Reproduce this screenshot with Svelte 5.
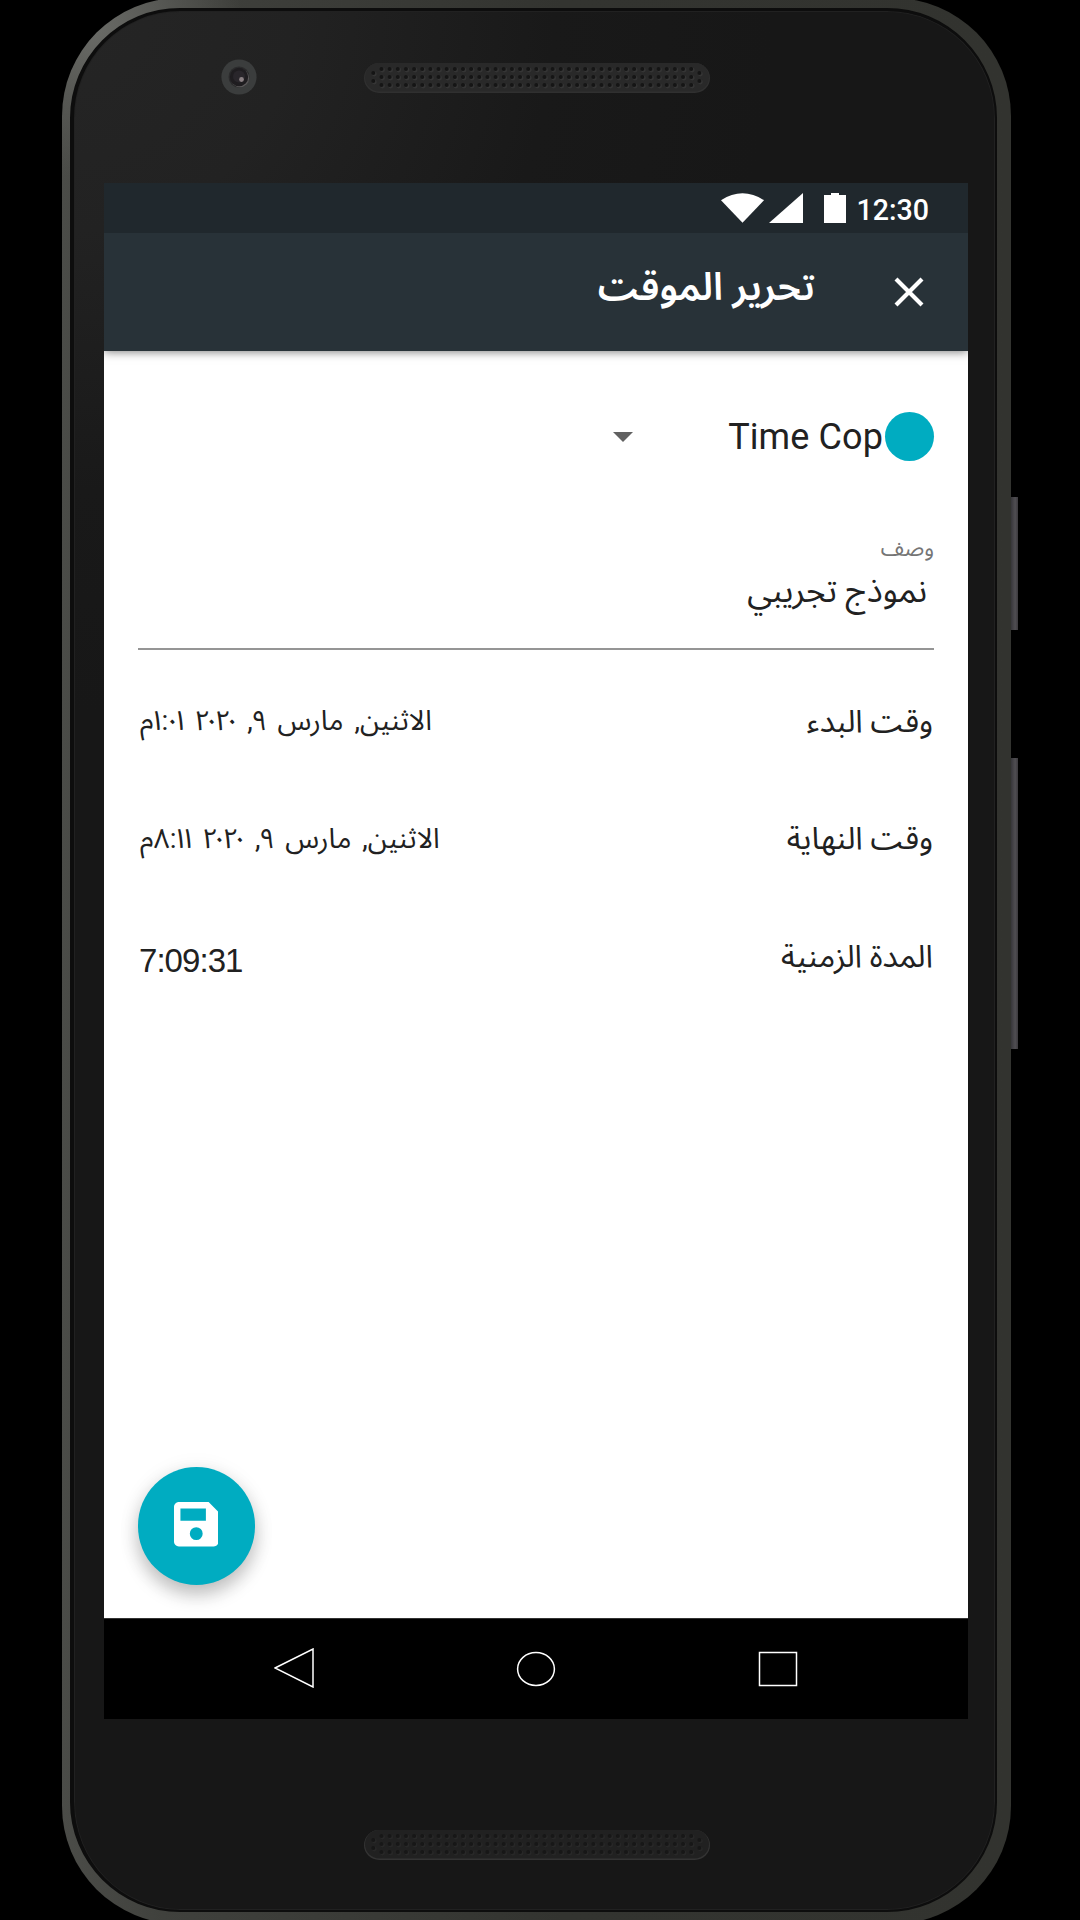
<script>
  const rows = [
    { label: 'وقت البدء', value: 'الاثنين, مارس ٩, ٢٠٢٠ ١:٠١م', kind: 'date' },
    { label: 'وقت النهاية', value: 'الاثنين, مارس ٩, ٢٠٢٠ ٨:١١م', kind: 'date' },
    { label: 'المدة الزمنية', value: '7:09:31', kind: 'duration' }
  ];
  const columns = Array.from({ length: 39 }, (_, i) => 17.5 + i * 8.15);
  const holes = [
    ...columns.flatMap((x) => [6, 14, 22].map((y) => ({ x, y }))),
    ...[9.3, 335.4].flatMap((x) => [10, 18].map((y) => ({ x, y })))
  ];
</script>

{#snippet grille(dim)}
  <svg class="grille" class:dim viewBox="0 0 346 30">
    <rect class="slot-edge" x="0" y="0" width="346" height="30" rx="15" />
    <rect class="slot" x="1" y="0" width="344" height="28.4" rx="14.2" />
    {#each holes as h}
      <circle class="hole-light" cx={h.x + 1} cy={h.y + 1} r="2.4" />
      <circle class="hole" cx={h.x} cy={h.y} r="2" />
    {/each}
  </svg>
{/snippet}

<div class="page">
  <div class="phone">
    <i class="key power"></i>
    <i class="key volume"></i>
    <div class="glass">
      <div class="top-bezel">
        <svg class="camera" viewBox="0 0 36 36">
          <circle cx="18" cy="18" r="17.6" fill="#3b3d3d" />
          <circle cx="18" cy="18" r="10.5" fill="#2b2b2c" />
          <circle cx="19" cy="19" r="9.2" fill="#5a5859" />
          <circle cx="18" cy="18" r="9.2" fill="#1f1d20" />
          <circle cx="18" cy="17.5" r="6" fill="#29262b" />
          <circle cx="20.5" cy="20.5" r="2.4" fill="#8a8083" />
        </svg>
        {@render grille(false)}
      </div>

      <main class="screen" dir="rtl">
        <div class="status" dir="ltr">
          <svg class="wifi" viewBox="0 0 44 30"><path d="M0 7Q22-7 44 7L22 30Z" /></svg>
          <svg class="signal" viewBox="0 0 34 30"><path d="M34 0V30H0Z" /></svg>
          <svg class="battery" viewBox="0 0 22 30"><path d="M7 0H15V2H22V30H0V2H7Z" /></svg>
          <span class="clock">12:30</span>
        </div>
        <header>
          <svg class="close" viewBox="0 0 30 30"><path d="M2 2L28 28M28 2L2 28" /></svg>
          <h1>تحرير الموقت</h1>
        </header>
        <section class="form">
          <div class="project">
            <i class="dot"></i>
            <span class="name" dir="ltr">Time Cop</span>
            <svg class="caret" viewBox="0 0 20 10"><path d="M0 0H20L10 10Z" /></svg>
          </div>
          <div class="field">
            <span class="hint">وصف</span>
            <span class="value">نموذج تجريبي</span>
          </div>
          {#each rows as row}
            <div class="row">
              <span class="label">{row.label}</span>
              <span class={row.kind}>{row.value}</span>
            </div>
          {/each}
          <div class="fab">
            <svg viewBox="3 3 18 18">
              <path fill-rule="evenodd" d="M17 3H5C3.9 3 3 3.9 3 5V19C3 20.1 3.9 21 5 21H19C20.1 21 21 20.1 21 19V7ZM5.6 5.6H15.9V10.6H5.6ZM12 13.2A2.6 2.6 0 1 1 12 18.4A2.6 2.6 0 0 1 12 13.2Z" />
            </svg>
          </div>
        </section>
        <nav dir="ltr">
          <svg class="back" viewBox="0 0 40 40"><path d="M1 20L39 1V39Z" /></svg>
          <svg class="home" viewBox="0 0 40 36"><ellipse cx="20" cy="18" rx="18.4" ry="16.4" /></svg>
          <svg class="recent" viewBox="0 0 40 36"><rect x="1.5" y="1.5" width="37" height="33" /></svg>
        </nav>
      </main>

      <div class="bottom-bezel">{@render grille(true)}</div>
    </div>
  </div>
</div>

<style>
  :global(body) { background: #000; }
  .page {
    width: 1080px;
    height: 1920px;
    overflow: hidden;
    background: #000;
    display: flex;
    font-family: Roboto, "Noto Sans Arabic", "Noto Sans", "DejaVu Sans", sans-serif;
    color: #212121;
  }
  .phone {
    position: relative;
    box-sizing: border-box;
    flex: none;
    width: 949px;
    height: 1926px;
    margin: -2px 0 0 62px;
    padding: 10px 14px 12px 8px;
    border-radius: 118px;
    background:
      radial-gradient(circle at 30px 30px, #6a6b67 0, #575854 70px, transparent 150px),
      linear-gradient(90deg, #4b4c48 0, #40413d 100px, #333430 500px, #32332f);
  }
  .key {
    position: absolute;
    left: 949px;
    width: 7px;
    background: linear-gradient(90deg, #37363a, #504e52 60%, #3b393d);
  }
  .power { top: 499px; height: 133px; }
  .volume { top: 760px; height: 291px; }
  .glass {
    box-sizing: border-box;
    width: 927px;
    height: 1904px;
    border: solid #0d0d0d;
    border-width: 3px 2px 2px 4px;
    border-radius: 110px;
    padding: 0 27px 0 30px;
    background: radial-gradient(circle at 0 0, #252525 0, #222 220px, #191919 480px, #171717 700px);
    box-shadow: inset 0 0 0 1px #212121;
    display: flex;
    flex-direction: column;
  }
  .top-bezel { height: 172px; display: flex; flex: none; }
  .camera { width: 36px; height: 36px; margin: 48px 0 0 117px; }
  .grille { width: 346px; height: 30px; margin: 52px 0 0 107px; }
  .slot-edge { fill: #303030; }
  .slot { fill: #292929; }
  .hole { fill: #151515; }
  .hole-light { fill: #353535; }
  .dim .slot-edge { fill: #343434; }
  .dim .slot { fill: #212121; }
  .dim .hole { fill: #171717; }
  .dim .hole-light { fill: #282828; }
  .bottom-bezel { display: flex; }
  .bottom-bezel .grille { margin: 111px 0 0 260px; }

  .screen { width: 864px; height: 1536px; flex: none; display: flex; flex-direction: column; background: #fff; }
  .status {
    height: 50px;
    flex: none;
    background: #20282d;
    display: flex;
    align-items: center;
    justify-content: flex-end;
    padding-right: 39px;
    fill: #fff;
    box-sizing: border-box;
  }
  .wifi { width: 43px; height: 30px; margin-right: 5px; }
  .signal { width: 34px; height: 30px; margin-right: 21px; }
  .battery { width: 22px; height: 30px; margin-right: 10px; }
  .clock { color: #fff; font-size: 28.6px; font-weight: 500; line-height: 46px; padding-top: 4px; }
  header {
    height: 118px;
    flex: none;
    display: flex;
    background: #283238;
    color: #fff;
    box-shadow: 0 1px 9px rgba(0, 0, 0, 0.5);
    clip-path: inset(0 0 -20px 0);
    z-index: 1;
  }
  .close { width: 30px; height: 30px; margin: 44px 44px 0 79px; stroke: #fff; stroke-width: 4.2; }
  h1 { margin: 0; font-size: 38.4px; line-height: 108px; font-weight: 600; white-space: nowrap; }
  .form { height: 1267px; flex: none; padding: 0 34px; display: flex; flex-direction: column; }
  .project { height: 49px; margin-top: 61px; display: flex; align-items: center; flex: none; }
  .dot { width: 49px; height: 49px; border-radius: 50%; background: #00acc1; }
  .name { font-size: 36px; letter-spacing: 0.1px; margin-right: 2px; }
  .caret { width: 20px; height: 10px; fill: #616161; margin-right: 95px; }
  .field { height: 125px; margin-top: 62px; border-bottom: 2px solid #959595; display: flex; flex-direction: column; flex: none; }
  .hint { font-size: 21.8px; line-height: 36px; color: #757575; padding-top: 8px; }
  .value { font-size: 33.5px; line-height: 48px; padding-right: 7px; }
  .row { height: 117.5px; flex: none; display: flex; justify-content: space-between; align-items: center; white-space: nowrap; }
  .field + .row { margin-top: 13px; }
  .label { font-size: 31.4px; padding-right: 1px; }
  .date { font-size: 28px; font-feature-settings: "pnum"; word-spacing: 4px; padding-left: 2px; }
  .duration { font: 33px "Liberation Sans", sans-serif; letter-spacing: -0.95px; padding: 8px 0 0 1px; }
  .fab {
    width: 117.5px;
    height: 117.5px;
    border-radius: 50%;
    background: #00acc1;
    margin: auto 0 33.5px -0.5px;
    box-shadow: 0 10px 18px rgba(0, 0, 0, 0.22), 0 3px 22px rgba(0, 0, 0, 0.08);
    align-self: flex-end;
    display: flex;
    justify-content: center;
    align-items: center;
    flex: none;
  }
  .fab svg { width: 44.5px; height: 44.5px; fill: #fff; margin: 0 1px 3px 0; }
  nav {
    height: 101px;
    box-sizing: border-box;
    background: #000;
    border-top: 1px solid #333;
    display: flex;
    align-items: center;
    fill: none;
    stroke: #fff;
    stroke-width: 1.5;
  }
  .back { width: 40px; height: 40px; margin: 0 0 3px 170px; }
  .home { width: 40px; height: 36px; margin: 0 0 1px 202px; }
  .recent { width: 40px; height: 36px; margin: 0 0 1px 202px; }
</style>
